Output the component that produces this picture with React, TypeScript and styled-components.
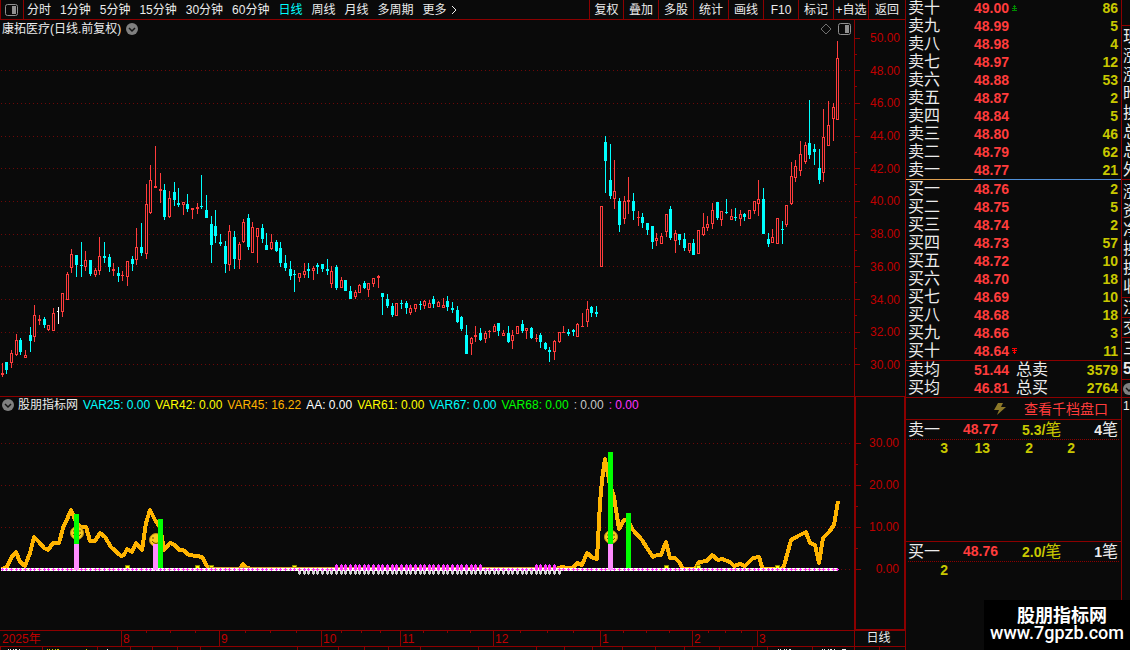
import React from 'react';
import styled, { createGlobalStyle, css } from 'styled-components';

const C = {
  bg: '#0a0a0a',
  line: '#8c0000',
  grid: '#6e0808',
  axis: '#c00000',
  up: '#ff3c3c',
  down: '#00ffff',
  text: '#ececec',
  qty: '#c8c800',
  orange: '#ffb400',
  green: '#00ff00',
  pink: '#ff8cff',
  magenta: '#ff32ff',
};

const Global = createGlobalStyle`
  * { box-sizing: border-box; }
  body {
    margin: 0;
    background: ${C.bg};
    color: ${C.text};
    font: 12px/16px "Liberation Sans", "Noto Sans CJK SC", sans-serif;
    overflow: hidden;
  }
  button {
    margin: 0; padding: 0; border: 0; background: none;
    color: inherit; font: inherit; cursor: pointer; white-space: nowrap;
  }
  svg { display: block; }
`;

/* x, high, body top, body bottom, low, kind (1 rise, 0 fall, 2 flat) */
const CANDLES: number[][] = [
  [2,363,373,375,377,1],[6,362,362,370,374,0],[11,350,353,363,368,1],[16,334,340,355,356,1],
  [20,338,340,352,355,0],[25,350,355,358,358,1],[30,327,335,341,352,0],[34,305,315,337,342,1],
  [39,315,319,321,325,1],[44,317,319,325,328,0],[48,325,325,330,331,1],[53,308,313,331,331,1],
  [58,307,311,312,324,2],[62,293,293,312,317,1],[67,272,274,300,300,1],[71,249,254,268,273,1],
  [76,255,255,265,277,0],[81,242,265,266,277,0],[85,251,260,267,271,1],[90,260,260,274,276,0],
  [95,268,270,275,277,1],[99,237,256,271,275,1],[104,242,256,258,263,0],[109,254,257,267,272,0],
  [113,263,269,271,276,1],[118,267,273,276,282,0],[122,271,275,276,281,1],[127,261,261,277,286,1],
  [132,256,259,264,271,0],[136,228,247,260,265,1],[141,223,247,253,256,0],[146,184,204,254,259,1],
  [150,165,180,213,214,1],[155,146,186,188,188,1],[160,173,189,191,203,1],[164,184,190,217,220,0],
  [169,191,198,217,218,1],[174,182,192,200,206,0],[178,188,203,205,207,0],[183,202,202,205,215,1],
  [187,194,204,209,212,0],[192,208,208,210,219,1],[197,203,207,209,214,1],[201,175,206,207,209,0],
  [206,195,210,218,218,0],[211,216,224,245,263,0],[215,210,226,236,243,0],[220,234,242,244,246,0],
  [225,241,246,264,273,0],[229,225,231,265,271,1],[234,231,237,259,269,0],[239,242,244,260,269,1],
  [243,219,222,242,243,1],[248,214,218,247,250,0],[252,222,227,253,253,1],[257,228,228,237,263,1],
  [262,224,228,239,243,0],[266,233,245,250,250,0],[271,234,242,249,250,1],[276,240,242,251,252,0],
  [280,242,248,263,267,0],[285,255,263,268,271,0],[290,261,269,276,280,0],[294,270,274,275,292,0],
  [299,273,273,278,282,1],[304,263,271,275,278,1],[308,263,269,271,278,0],[313,266,268,271,280,1],
  [317,263,265,267,274,0],[322,264,264,269,272,0],[327,259,269,271,275,0],[331,266,271,284,288,1],
  [336,265,267,288,290,0],[341,277,280,288,288,1],[345,280,280,291,291,0],[350,286,291,299,299,0],
  [355,290,292,297,299,1],[359,284,285,293,293,1],[364,281,283,288,289,0],[368,283,283,290,297,1],
  [373,278,278,284,287,1],[378,275,276,278,288,1],[382,293,293,297,315,0],[387,294,299,306,308,0],
  [392,303,306,315,317,0],[396,303,303,316,316,1],[401,300,303,304,309,0],[406,301,303,308,314,0],
  [410,305,308,313,315,1],[415,304,304,309,312,1],[420,301,304,305,310,0],[424,300,301,306,309,1],
  [429,300,303,308,308,1],[433,296,299,304,308,0],[438,301,302,307,307,1],[443,298,305,308,308,1],
  [447,296,301,307,311,0],[452,302,308,310,313,0],[457,306,310,322,323,0],[461,316,317,329,331,0],
  [466,325,335,354,354,0],[471,337,338,344,355,1],[475,326,335,337,342,1],[480,328,333,340,341,0],
  [485,331,333,339,343,1],[489,330,331,332,338,1],[494,324,326,332,332,1],[498,323,323,331,336,0],
  [503,330,333,336,336,1],[508,326,333,342,343,0],[512,330,335,341,349,1],[517,326,326,334,334,1],
  [522,320,324,331,333,0],[526,328,328,331,339,1],[531,327,328,338,339,0],[536,334,338,339,342,1],
  [540,333,335,342,348,0],[545,342,343,349,350,0],[549,347,350,352,362,0],[554,340,341,352,360,1],
  [559,332,332,342,343,1],[563,326,332,333,333,1],[568,329,332,334,336,0],[573,329,330,332,336,0],
  [577,323,324,337,337,1],[582,313,326,327,327,1],[587,301,309,322,327,1],[591,306,307,313,317,0],
  [596,306,312,314,317,0],[601,206,206,267,267,1],[605,136,142,161,193,0],[610,144,180,196,199,0],
  [614,160,191,199,209,1],[619,198,201,225,232,0],[624,196,201,219,224,1],[628,177,200,202,214,1],
  [633,193,201,211,220,0],[638,211,217,218,226,1],[642,213,217,223,228,0],[647,223,223,230,235,0],
  [652,226,226,242,249,0],[656,233,238,241,246,1],[661,233,236,244,244,1],[666,214,214,232,237,1],
  [670,206,209,238,240,0],[675,230,233,241,253,1],[679,234,234,240,245,0],[684,233,239,248,251,0],
  [689,243,243,251,253,1],[693,239,243,255,255,0],[698,230,230,254,254,1],[703,213,227,235,236,1],
  [707,216,224,228,231,1],[712,203,210,224,229,1],[717,202,202,218,220,0],[721,211,211,220,226,1],
  [726,199,212,213,214,0],[731,209,216,220,220,1],[735,208,217,218,221,0],[740,210,214,219,226,1],
  [744,213,214,217,221,0],[749,210,210,219,219,1],[754,201,201,211,214,1],[758,180,199,204,216,1],
  [763,188,199,234,234,0],[768,233,239,244,247,0],[772,229,237,243,243,1],[777,218,218,244,244,1],
  [782,221,229,230,244,0],[786,205,205,225,227,1],[791,162,176,204,205,1],[795,160,166,178,182,1],
  [800,141,154,171,176,1],[805,142,145,162,164,1],[809,100,143,155,159,0],[814,144,149,152,165,0],
  [819,149,168,180,184,0],[823,109,137,173,182,1],[828,101,125,146,146,1],[833,103,107,119,141,1],
  [837,41,58,120,120,1],
];

const WAVE =
  '2,569 7,567 11,558 16,552 20,562 25,566 30,553 34,537 39,542 44,548 48,550 53,543 59,543 63,528 68,517 71,510 76,522 81,527 86,527 90,541 95,541 100,533 105,537 111,547 121,556 124,555 127,549 132,552 136,543 142,550 146,523 150,510 155,520 160,527 164,550 170,543 175,545 179,550 183,550 189,555 197,556 202,557 207,566 211,569 240,569 243,564 247,568 252,569 556,569 562,567 567,568 573,568 577,563 582,565 587,553 593,558 597,559 600,503 602,480 605,459 610,485 614,497 619,529 624,520 628,520 633,530 642,540 647,548 653,557 657,555 661,555 666,542 670,558 675,558 679,562 683,569 695,569 699,562 707,561 712,555 718,560 722,559 730,562 734,566 740,564 745,566 753,558 759,557 762,567 764,569 782,569 784,566 791,540 798,536 806,532 810,543 815,545 819,563 823,538 829,532 834,525 838,501';

const PRICES = ['50.00', '48.00', '46.00', '44.00', '42.00', '40.00', '38.00', '36.00', '34.00', '32.00', '30.00'];
const PRICE_Y = [38, 70, 103, 136, 168, 201, 234, 266, 299, 332, 364];
const VALUES = ['30.00', '20.00', '10.00', '0.00'];
const VALUE_Y = [443, 485, 527, 569];

const PERIODS = ['分时', '1分钟', '5分钟', '15分钟', '30分钟', '60分钟', '日线', '周线', '月线', '多周期'];
const TOOLS = ['复权', '叠加', '多股', '统计', '画线', 'F10', '标记', '+自选', '返回'];

const READOUTS: [string, string][] = [
  ['VAR25: 0.00', '#00ffff'],
  ['VAR42: 0.00', '#ffff00'],
  ['VAR45: 16.22', C.orange],
  ['AA: 0.00', '#ffffff'],
  ['VAR61: 0.00', '#ffff00'],
  ['VAR67: 0.00', '#00ffff'],
  ['VAR68: 0.00', C.green],
  [': 0.00', '#c8c8c8'],
  [': 0.00', '#ff32ff'],
];

const MONTHS: [string, number][] = [
  ['2025年', 121], ['8', 98], ['9', 102], ['10', 79], ['11', 93], ['12', 107], ['1', 92], ['2', 65], ['3', 97],
];
const WEEK_TICKS = [146, 170, 195, 245, 270, 296, 341, 361, 380, 423, 447, 470, 520, 547, 573, 623, 646, 669, 708, 725, 741];
const MONTH_TICKS = [121, 219, 321, 400, 493, 600, 692, 757];
const TAB_EDGES = [0, 42, 97, 130, 152, 177, 200, 297, 338, 364, 388, 420, 478, 536, 564, 592, 622, 655, 684, 719, 752, 767, 812, 854, 879];

type Quote = [string, string, string, ('up' | 'down')?];
const ASKS: Quote[] = [
  ['卖十', '49.00', '86', 'up'], ['卖九', '48.99', '5'], ['卖八', '48.98', '4'], ['卖七', '48.97', '12'],
  ['卖六', '48.88', '53'], ['卖五', '48.87', '2'], ['卖四', '48.84', '5'], ['卖三', '48.80', '46'],
  ['卖二', '48.79', '62'], ['卖一', '48.77', '21'],
];
const BIDS: Quote[] = [
  ['买一', '48.76', '2'], ['买二', '48.75', '5'], ['买三', '48.74', '2'], ['买四', '48.73', '57'],
  ['买五', '48.72', '10'], ['买六', '48.70', '18'], ['买七', '48.69', '10'], ['买八', '48.68', '18'],
  ['买九', '48.66', '3'], ['买十', '48.64', '11', 'down'],
];

const Page = styled.div`
  display: grid;
  grid-template-columns: minmax(0, 1fr) 216px 8px;
  height: 100vh;
  min-height: 650px;
  overflow: hidden;
`;

const Main = styled.main`
  display: flex;
  flex-direction: column;
  min-width: 0;
  border-right: 1px solid ${C.line};
`;

const Toolbar = styled.header`
  display: flex;
  height: 20px;
  border-bottom: 1px solid ${C.line};
  border-left: 1px solid ${C.line};
`;

const LayoutButton = styled.button`
  display: grid;
  place-items: center;
  width: 23px;
  padding-right: 2px;
  border-right: 1px solid ${C.line};
`;

const Periods = styled.nav`
  display: flex;
  flex: 1;
  gap: 9px;
  padding-left: 3px;
  min-width: 0;
`;

const PeriodButton = styled.button<{ $active?: boolean }>`
  display: flex;
  align-items: center;
  color: ${(p) => (p.$active ? C.down : C.text)};
`;

const Tools = styled.div`
  display: grid;
  grid-template-columns: 34px repeat(7, 35px) 37px;
`;

const ToolButton = styled.button`
  border-left: 1px solid ${C.line};
  overflow: hidden;
`;

const Panel = styled.section`
  display: grid;
  grid-template-columns: minmax(0, 1fr) 51px;
  border-bottom: 1px solid ${C.line};
`;

const Plot = styled.div`
  min-width: 0;
`;

const PlotHead = styled.div<{ $h: number }>`
  display: flex;
  align-items: center;
  height: ${(p) => p.$h}px;
  padding: 0 3px 0 2px;
  gap: 5px;
  white-space: nowrap;
`;

const HeadName = styled.h2`
  margin: 0 0 0 -1px;
  font: inherit;
`;

const HeadTools = styled.div`
  display: flex;
  align-items: center;
  gap: 6px;
  margin-left: auto;
`;

const PlotSvg = styled.svg`
  width: 100%;
`;

const Axis = styled.div<{ $heavy?: boolean }>`
  display: flex;
  border-left: ${(p) => (p.$heavy ? 2 : 1)}px solid ${C.line};
  ${(p) => p.$heavy && css`
    border-right: 1px solid ${C.line};
    border-bottom: 1px solid ${C.line};
  `}
`;

const AxisLabels = styled.div<{ $top: number; $row: number }>`
  display: grid;
  grid-auto-rows: ${(p) => p.$row}px;
  align-content: space-between;
  align-items: center;
  flex: 1;
  padding-top: ${(p) => p.$top}px;
  padding-right: 5px;
  color: ${C.axis};
  text-align: right;
`;

const PriceLabels = styled(AxisLabels)`
  padding-bottom: 15px;
`;

const ValueLabels = styled(AxisLabels)`
  align-content: start;
`;

const Readout = styled.span`
  color: ${(p) => p.color};
`;

const TimeRow = styled.div`
  display: grid;
  grid-template-columns: minmax(0, 1fr) 51px;
  height: 16px;
  border-bottom: 1px solid ${C.line};
`;

const MonthGrid = styled.div`
  display: grid;
  grid-template-columns: ${MONTHS.map(([, w]) => `${w}fr`).join(' ')};
  height: 13px;
`;

const Month = styled.span`
  padding-left: 1px;
  line-height: 13px;
  color: ${C.axis};
  border-left: 1px solid ${C.line};
  &:first-child { border-left-color: transparent; }
`;

const PeriodCell = styled.div`
  border-left: 1px solid ${C.line};
  line-height: 15px;
  text-align: center;
  padding-right: 3px;
`;

const Side = styled.aside`
  display: flex;
  flex-direction: column;
  min-width: 0;
  border-right: 1px solid ${C.line};
  font-size: 14px;
`;

const AskBox = styled.div`
  display: flex;
  align-items: flex-end;
  height: 179px;
  overflow: hidden;
`;

const Spread = styled.div`
  height: 1px;
  background: linear-gradient(to right, #e0a050 67px, #5090d8 67px);
`;

const Book = styled.table`
  width: 100%;
  table-layout: fixed;
  border-collapse: collapse;
  td, th {
    height: 18px;
    padding: 0;
    line-height: 18px;
    white-space: nowrap;
  }
`;

const Name = styled.th`
  width: 50px;
  text-indent: 2px;
  text-align: left;
  font-size: 16px;
  font-weight: 400;
`;

const Price = styled.td`
  width: 53px;
  color: ${C.up};
  font-weight: 700;
  text-align: right;
`;

const Mark = styled.td`
  width: 12px;
  svg { margin-left: 3px; }
`;

const Qty = styled.td`
  color: ${C.qty};
  font-weight: 700;
  text-align: right;
  &:last-child { border-right: 3px solid transparent; }
`;

const Totals = styled.div`
  border-top: 1px solid ${C.line};
  border-bottom: 1px solid ${C.line};
`;

const TotalName = styled.th`
  width: 42px;
  text-indent: 7px;
  text-align: left;
  font-size: 16px;
  font-weight: 400;
`;

const DepthLink = styled.div`
  display: flex;
  align-items: center;
  justify-content: flex-end;
  gap: 18px;
  height: 22px;
  padding-right: 13px;
  border-bottom: 1px solid ${C.line};
  a { color: ${C.up}; text-decoration: none; }
`;

const Queue = styled.section<{ $h?: number }>`
  ${(p) => p.$h && css`height: ${p.$h}px; border-bottom: 1px solid ${C.line};`}
`;

const QueueHead = styled.div`
  display: grid;
  grid-template-columns: 55px 59px 1fr auto;
  height: 20px;
  margin: 0 2px;
  padding-right: 1px;
  line-height: 19px;
  border-bottom: 1px dotted ${C.line};
  font-weight: 700;
  b { color: ${C.up}; }
  span { color: ${C.qty}; }
  i { font-size: 16px; font-weight: 400; font-style: normal; }
`;

const Lots = styled.div`
  display: grid;
  grid-template-columns: 42px 42px 43px 42px;
  line-height: 17px;
  color: ${C.qty};
  font-weight: 700;
  text-align: right;
`;

const Strip = styled.aside`
  display: flex;
  flex-direction: column;
  overflow: hidden;
  font-size: 16px;
  white-space: nowrap;
`;

const StripGroup = styled.div<{ $h: number; $row: number }>`
  display: flex;
  flex-direction: column;
  justify-content: center;
  flex: none;
  height: ${(p) => p.$h}px;
  padding-left: 1px;
  line-height: ${(p) => p.$row}px;
  border-bottom: 1px solid ${C.line};
`;

const StripNote = styled.span`
  padding-left: 1px;
  font-size: 12px;
`;

const Watermark = styled.footer`
  position: fixed;
  right: 0;
  bottom: 0;
  width: 146px;
  height: 50px;
  padding-top: 4px;
  background: #000;
  color: #fff;
  text-align: center;
  font-family: "Noto Sans CJK SC", sans-serif;
  strong { display: block; padding-left: 10px; font-size: 18px; line-height: 20px; }
  span { display: block; font: 500 18px/18px Roboto, sans-serif; }
`;

const PanelIcon = () => (
  <svg width="13" height="12" viewBox="0 0 13 12" aria-hidden="true">
    <rect x=".5" y=".5" width="12" height="11" rx="2" fill="none" stroke="#909090" />
    <rect x="7" y="2" width="4" height="8" fill="#909090" />
  </svg>
);

const Chevron = () => (
  <svg width="12" height="12" viewBox="0 0 12 12" aria-hidden="true">
    <circle cx="6" cy="6" r="6" fill="#808080" />
    <path d="M3 5l3 3 3-3" fill="none" stroke="#151515" strokeWidth="1.5" />
  </svg>
);

const Limit = ({ dir }: { dir: 'up' | 'down' }) => (
  <svg width="5" height="6" viewBox="0 0 5 6" shapeRendering="crispEdges" aria-hidden="true">
    {dir === 'up' ? (
      <path d="M2 0h1v1h1v1H3v1h2v1H3v1h2v1H0V5h2V4H0V3h2V2H1V1h1z" fill="#008c00" />
    ) : (
      <path d="M0 0h5v1H3v1h2v1H3v1h1v1H3v1H2V5H1V4h1V3H0V2h2V1H0z" fill="#ff0000" />
    )}
  </svg>
);

const Smile = ({ x, y }: { x: number; y: number }) => (
  <g>
    <circle cx={x} cy={y} r="6.5" fill="#f8cc20" stroke="#c89010" />
    <path d={`M${x - 4} ${y - 2}h2M${x + 2} ${y - 2}h2M${x - 4} ${y + 1}q4 5 8 0`} fill="none" stroke="#6a4800" />
  </g>
);

const GridLines = ({ ys }: { ys: number[] }) => (
  <>
    {ys.map((y) => (
      <line key={y} x1="1" x2="852" y1={y + 0.5} y2={y + 0.5} stroke={C.grid} strokeDasharray="1 3" />
    ))}
  </>
);

function CandleChart() {
  return (
    <PlotSvg height="358" viewBox="0 38 854 358" preserveAspectRatio="none" shapeRendering="crispEdges" role="img" aria-label="日线">
      <GridLines ys={PRICE_Y.slice(1)} />
      {CANDLES.map(([x, high, top, bottom, low, kind]) => {
        const color = kind === 1 ? C.up : kind === 0 ? C.down : '#fff';
        return (
          <g key={x} fill={color}>
            <rect x={x} y={high} width="1" height={low - high} />
            <rect x={x - 1} y={top} width={kind === 2 ? 2 : 3} height={bottom - top} />
            {kind === 1 && bottom - top > 2 && <rect x={x} y={top + 1} width="1" height={bottom - top - 2} fill={C.bg} />}
          </g>
        );
      })}
    </PlotSvg>
  );
}

const inSpikes = (x: number) => (x >= 336 && x <= 481) || (x >= 535 && x <= 555);

function IndicatorChart() {
  return (
    <PlotSvg height="217" viewBox="0 413 854 217" preserveAspectRatio="none" shapeRendering="crispEdges" role="img" aria-label="股朋指标网">
      <GridLines ys={VALUE_Y} />
      <polyline points={WAVE} fill="none" stroke={C.orange} strokeWidth="4" strokeLinejoin="round" />
      <g fill="#ffff00" stroke="#8c8c00">
        {[127, 197, 211, 294, 666, 698, 777].map((x) => (
          <rect key={x} x={x - 1.5} y="565.5" width="4" height="4" />
        ))}
      </g>
      <rect x="1" y="568" width="837" height="3" fill="#fff" />
      <rect x="210" y="567" width="350" height="1" fill="#c89628" />
      <line x1="1" x2="838" y1="569.5" y2="569.5" stroke="#ffe070" strokeDasharray="1 1" />
      {CANDLES.map(([x]) => (
        <g key={x}>
          <rect x={x - 1} y="569" width="3" height="1" fill={C.magenta} />
          <rect x={x} y="568" width="1" height="3" fill={C.magenta} />
          {x > 296 && x < 562 && <path d={`M${x - 1} 571h3v3h-1v1h-1v-1h-1z`} fill="#d0d0d0" />}
          {inSpikes(x) && <path d={`M${x} 564h1v1h1v4h-1v1h-1v-1h-1v-4h1z`} fill={C.magenta} />}
        </g>
      ))}
      <g shapeRendering="auto">
        <Smile x={77} y={533} />
        <Smile x={156} y={540} />
        <Smile x={611} y={537} />
      </g>
      <g fill={C.pink}>
        <rect x="74" y="544" width="5" height="26" />
        <rect x="153" y="544" width="5" height="26" />
        <rect x="608" y="544" width="5" height="26" />
      </g>
      <g fill={C.green}>
        <rect x="74" y="514" width="5" height="30" />
        <rect x="158" y="519" width="5" height="49" />
        <rect x="608" y="452" width="5" height="92" />
        <rect x="626" y="513" width="5" height="55" />
      </g>
    </PlotSvg>
  );
}

const AxisTicks = ({ ys, top, h }: { ys: number[]; top: number; h: number }) => (
  <svg width="5" height={h} viewBox={`0 ${top} 5 ${h}`} shapeRendering="crispEdges" fill={C.line} aria-hidden="true">
    {ys.map((y, i) => (
      <g key={y}>
        <rect x="0" y={y} width="5" height="1" />
        {i < ys.length - 1 && <rect x="0" y={Math.floor((y + ys[i + 1]) / 2)} width="2" height="1" />}
      </g>
    ))}
  </svg>
);

const BookRows = ({ rows }: { rows: Quote[] }) => (
  <Book>
    <tbody>
      {rows.map(([name, price, qty, mark]) => (
        <tr key={name}>
          <Name scope="row">{name}</Name>
          <Price>{price}</Price>
          <Mark>{mark && <Limit dir={mark} />}</Mark>
          <Qty>{qty}</Qty>
        </tr>
      ))}
    </tbody>
  </Book>
);

export default function App() {
  return (
    <Page>
      <Global />
      <Main>
        <Toolbar>
          <LayoutButton aria-label="布局"><PanelIcon /></LayoutButton>
          <Periods>
            {PERIODS.map((p) => (
              <PeriodButton key={p} $active={p === '日线'}>{p}</PeriodButton>
            ))}
            <PeriodButton>
              更多
              <svg width="12" height="10" viewBox="0 0 12 10" fill="none" stroke={C.text} aria-hidden="true">
                <path d="M5 1l4 4-4 4" />
              </svg>
            </PeriodButton>
          </Periods>
          <Tools>
            {TOOLS.map((t) => <ToolButton key={t}>{t}</ToolButton>)}
          </Tools>
        </Toolbar>

        <Panel>
          <Plot>
            <PlotHead $h={18}>
              <span>康拓医疗(日线.前复权)</span>
              <Chevron />
              <HeadTools>
                <svg width="12" height="12" viewBox="0 0 12 12" aria-hidden="true">
                  <path d="M6 1l5 5-5 5-5-5z" fill="none" stroke="#707070" />
                </svg>
                <PanelIcon />
              </HeadTools>
            </PlotHead>
            <CandleChart />
          </Plot>
          <Axis>
            <AxisTicks ys={PRICE_Y} top={20} h={376} />
            <PriceLabels $top={2} $row={32}>
              {PRICES.map((p) => <span key={p}>{p}</span>)}
            </PriceLabels>
          </Axis>
        </Panel>

        <Panel>
          <Plot>
            <PlotHead $h={16}>
              <Chevron />
              <HeadName>股朋指标网</HeadName>
              {READOUTS.map(([t, color]) => <Readout key={color + t} color={color}>{t}</Readout>)}
            </PlotHead>
            <IndicatorChart />
          </Plot>
          <Axis $heavy>
            <AxisTicks ys={VALUE_Y} top={397} h={232} />
            <ValueLabels $top={25} $row={42}>
              {VALUES.map((v) => <span key={v}>{v}</span>)}
            </ValueLabels>
          </Axis>
        </Panel>

        <TimeRow>
          <div>
            <PlotSvg height="2" viewBox="0 0 854 2" preserveAspectRatio="none" shapeRendering="crispEdges" fill={C.line} aria-hidden="true">
              {[...WEEK_TICKS, ...MONTH_TICKS].map((x) => <rect key={x} x={x} y="0" width="1" height="2" />)}
            </PlotSvg>
            <MonthGrid>
              {MONTHS.map(([m]) => <Month key={m}>{m}</Month>)}
            </MonthGrid>
          </div>
          <PeriodCell>日线</PeriodCell>
        </TimeRow>
        <PlotSvg height="3" viewBox="0 0 905 3" preserveAspectRatio="none" shapeRendering="crispEdges" aria-hidden="true">
          <g fill={C.line}>{TAB_EDGES.map((x) => <rect key={x} x={x} y="0" width="1" height="3" />)}</g>
          <path d="M8 2.5h1m1 0h1m2 0h1m1 0h2m2 0h1M778 2.5h1m1 0h1m3 0h1m1 0h1m2 0h2M822 2.5h1m1 0h1m3 0h1m1 0h2m2 0h1m7 0h4" stroke={C.text} />
          <path d="M47 2.5h1m1 0h1m2 0h1m2 0h1m1 0h2M86 2.5h1" stroke={C.qty} />
          <path d="M107 2.5h1" stroke={C.text} />
        </PlotSvg>
      </Main>

      <Side>
        <AskBox><BookRows rows={ASKS} /></AskBox>
        <Spread />
        <BookRows rows={BIDS} />
        <Totals>
          <Book>
            <tbody>
              <tr><Name scope="row">卖均</Name><Price>51.44</Price><TotalName scope="row">总卖</TotalName><Qty>3579</Qty></tr>
              <tr><Name scope="row">买均</Name><Price>46.81</Price><TotalName scope="row">总买</TotalName><Qty>2764</Qty></tr>
            </tbody>
          </Book>
        </Totals>
        <DepthLink>
          <svg width="12" height="12" viewBox="0 0 12 12" aria-hidden="true">
            <path d="M4 0h5L7 4h5L3 12l2-5H0z" fill="#8c7828" />
          </svg>
          <a href="#depth">查看千档盘口</a>
        </DepthLink>
        <Queue $h={122}>
          <QueueHead><i>卖一</i><b>48.77</b><span>5.3/<i>笔</i></span><div>4<i>笔</i></div></QueueHead>
          <Lots><span>3</span><span>13</span><span>2</span><span>2</span></Lots>
        </Queue>
        <Queue>
          <QueueHead><i>买一</i><b>48.76</b><span>2.0/<i>笔</i></span><div>1<i>笔</i></div></QueueHead>
          <Lots><span>2</span></Lots>
        </Queue>
      </Side>

      <Strip>
        <StripGroup $h={26} $row={18} />
        <StripGroup $h={154} $row={19}>
          {['现价', '涨跌', '涨幅', '昨收', '换手', '总量', '总额', '外盘'].map((t) => <span key={t}>{t}</span>)}
        </StripGroup>
        <StripGroup $h={118} $row={19}>
          {['涨停', '资产', '净资', '换手', '换率', '收益'].map((t) => <span key={t}>{t}</span>)}
        </StripGroup>
        <StripGroup $h={20} $row={19}>江苏</StripGroup>
        <StripGroup $h={20} $row={19}>交易</StripGroup>
        <StripGroup $h={42} $row={20}><span>三日</span><b>5日</b></StripGroup>
        <StripGroup $h={18} $row={12}><Chevron /></StripGroup>
        <StripNote>1</StripNote>
      </Strip>

      <Watermark>
        <strong>股朋指标网</strong>
        <span>www.7gpzb.com</span>
      </Watermark>
    </Page>
  );
}
